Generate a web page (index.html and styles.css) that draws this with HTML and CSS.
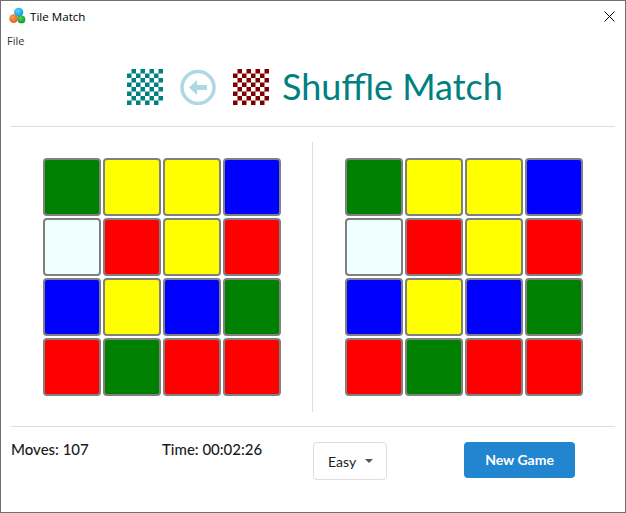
FILE: index.html
```html
<!DOCTYPE html>
<html>
  <head>
    <title>Tile Match</title>
    <link rel="stylesheet" href="styles.css">
  </head>
  <body>
    <div class="window">
      <div class="titlebar">
        <svg class="app_icon" width="18" height="18" viewBox="0 0 18 18">
          <defs>
            <radialGradient id="ball_cyan" cx="0.4" cy="0.35" r="0.7"><stop offset="0" stop-color="#50d8ff"/><stop offset="1" stop-color="#1090e0"/></radialGradient>
            <radialGradient id="ball_orange" cx="0.4" cy="0.35" r="0.7"><stop offset="0" stop-color="#ffa050"/><stop offset="1" stop-color="#e05a20"/></radialGradient>
            <radialGradient id="ball_green" cx="0.4" cy="0.35" r="0.7"><stop offset="0" stop-color="#50d850"/><stop offset="1" stop-color="#109030"/></radialGradient>
          </defs>
          <circle cx="9.7" cy="5.3" r="4.6" fill="url(#ball_cyan)"/>
          <circle cx="4.6" cy="11.6" r="4.3" fill="url(#ball_orange)"/>
          <circle cx="12.4" cy="12.4" r="3.9" fill="url(#ball_green)"/>
        </svg>
        <span class="app_title">Tile Match</span>
        <svg class="close_icon" width="11" height="11" viewBox="0 0 11 11">
          <path d="M0.5 0.5 L10.5 10.5 M10.5 0.5 L0.5 10.5" stroke="#000" fill="none"/>
        </svg>
      </div>
      <div class="menubar">File</div>

      <div class="heading">
        <svg class="checker" width="36" height="36" viewBox="0 0 8 8">
          <path fill="#008080" d="M1 0h1v1H1zM3 0h1v1H3zM5 0h1v1H5zM7 0h1v1H7zM0 1h1v1H0zM2 1h1v1H2zM4 1h1v1H4zM6 1h1v1H6zM1 2h1v1H1zM3 2h1v1H3zM5 2h1v1H5zM7 2h1v1H7zM0 3h1v1H0zM2 3h1v1H2zM4 3h1v1H4zM6 3h1v1H6zM1 4h1v1H1zM3 4h1v1H3zM5 4h1v1H5zM7 4h1v1H7zM0 5h1v1H0zM2 5h1v1H2zM4 5h1v1H4zM6 5h1v1H6zM1 6h1v1H1zM3 6h1v1H3zM5 6h1v1H5zM7 6h1v1H7zM0 7h1v1H0zM2 7h1v1H2zM4 7h1v1H4zM6 7h1v1H6z"/>
        </svg>
        <svg class="back" width="36" height="36" viewBox="0 0 36 36">
          <circle cx="18" cy="18.5" r="16" fill="none" stroke="#add8e6" stroke-width="3.5"/>
          <path fill="#add8e6" d="M9 18.5 L17 11 V16 H27 V21 H17 V26 Z"/>
        </svg>
        <svg class="checker" width="36" height="36" viewBox="0 0 8 8">
          <path fill="#800000" d="M1 0h1v1H1zM3 0h1v1H3zM5 0h1v1H5zM7 0h1v1H7zM0 1h1v1H0zM2 1h1v1H2zM4 1h1v1H4zM6 1h1v1H6zM1 2h1v1H1zM3 2h1v1H3zM5 2h1v1H5zM7 2h1v1H7zM0 3h1v1H0zM2 3h1v1H2zM4 3h1v1H4zM6 3h1v1H6zM1 4h1v1H1zM3 4h1v1H3zM5 4h1v1H5zM7 4h1v1H7zM0 5h1v1H0zM2 5h1v1H2zM4 5h1v1H4zM6 5h1v1H6zM1 6h1v1H1zM3 6h1v1H3zM5 6h1v1H5zM7 6h1v1H7zM0 7h1v1H0zM2 7h1v1H2zM4 7h1v1H4zM6 7h1v1H6z"/>
        </svg>
        <span class="game_title">Shuffle Match</span>
      </div>

      <div class="boards">
        <div class="board">
          <div class="tile green"></div><div class="tile yellow"></div><div class="tile yellow"></div><div class="tile blue"></div>
          <div class="tile azure"></div><div class="tile red"></div><div class="tile yellow"></div><div class="tile red"></div>
          <div class="tile blue"></div><div class="tile yellow"></div><div class="tile blue"></div><div class="tile green"></div>
          <div class="tile red"></div><div class="tile green"></div><div class="tile red"></div><div class="tile red"></div>
        </div>
        <div class="divider"></div>
        <div class="board">
          <div class="tile green"></div><div class="tile yellow"></div><div class="tile yellow"></div><div class="tile blue"></div>
          <div class="tile azure"></div><div class="tile red"></div><div class="tile yellow"></div><div class="tile red"></div>
          <div class="tile blue"></div><div class="tile yellow"></div><div class="tile blue"></div><div class="tile green"></div>
          <div class="tile red"></div><div class="tile green"></div><div class="tile red"></div><div class="tile red"></div>
        </div>
      </div>

      <div class="footer">
        <div class="stat moves">Moves: 107</div>
        <div class="stat time">Time: 00:02:26</div>
        <div class="dropdown">Easy<span class="caret"></span></div>
        <div class="new_game">New Game</div>
      </div>
    </div>
  </body>
</html>
```

FILE: styles.css
```css
html, body {
  margin: 0;
  padding: 0;
  background-color: #ffffff;
}

.window {
  box-sizing: border-box;
  width: 626px;
  height: 513px;
  border: solid 1px #707070;
  overflow: hidden;
  font-family: "Lato", sans-serif;
  color: #1b1c1d;
}

.titlebar {
  display: flex;
  align-items: center;
  height: 30px;
  padding-left: 8px;
  font-family: "Open Sans", sans-serif;
  font-size: 11.6px;
  color: #000000;
}

.app_title {
  margin-left: 3px;
}

.close_icon {
  margin-left: auto;
  margin-right: 10px;
}

.menubar {
  height: 18px;
  padding-left: 6px;
  font-family: "Open Sans", sans-serif;
  font-size: 11px;
  line-height: 20px;
  color: #333333;
}

.heading {
  box-sizing: border-box;
  display: flex;
  align-items: center;
  height: 78px;
  margin: 0 10px;
  padding-left: 116px;
  padding-bottom: 2px;
  border-bottom: solid 1px #dedede;
}

.back {
  margin: 0 17px 0 17px;
}

.game_title {
  margin-left: 13px;
  margin-bottom: 2px;
  font-size: 36px;
  color: #008080;
}

.boards {
  display: flex;
  height: 300px;
  margin: 0 10px;
  padding-top: 15px;
  box-sizing: border-box;
  border-bottom: solid 1px #dedede;
}

.board {
  display: grid;
  grid-template-columns: repeat(4, 58px);
  grid-auto-rows: 58px;
  gap: 2px;
  margin-top: 16px;
  margin-left: 32px;
  height: 238px;
}

.divider {
  width: 1px;
  height: 270px;
  margin-left: 31px;
  background-color: #dedede;
}

.tile {
  box-sizing: border-box;
  border: solid 2px #808080;
  border-radius: 4px;
}

.green { background-color: #008000; }
.yellow { background-color: #ffff00; }
.blue { background-color: #0000ff; }
.red { background-color: #ff0000; }
.azure { background-color: #f0ffff; }

.footer {
  display: flex;
  align-items: flex-start;
  margin: 14px 10px 0 10px;
}

.stat {
  font-size: 15px;
  font-weight: 500;
  line-height: 16px;
}

.moves {
  width: 151px;
}

.time {
  width: 151px;
}

.dropdown {
  box-sizing: border-box;
  display: flex;
  align-items: center;
  width: 74px;
  height: 38px;
  margin-top: 1px;
  padding-left: 14px;
  border: solid 1px #dedede;
  border-radius: 4px;
  font-size: 14px;
}

.caret {
  width: 0;
  height: 0;
  margin-left: 9px;
  border-left: solid 4px transparent;
  border-right: solid 4px transparent;
  border-top: solid 4px #555555;
}

.new_game {
  width: 111px;
  height: 36px;
  margin-top: 1px;
  margin-left: 77px;
  border-radius: 4px;
  background-color: #2185d0;
  color: #ffffff;
  font-size: 14px;
  font-weight: 700;
  line-height: 36px;
  text-align: center;
}
```
